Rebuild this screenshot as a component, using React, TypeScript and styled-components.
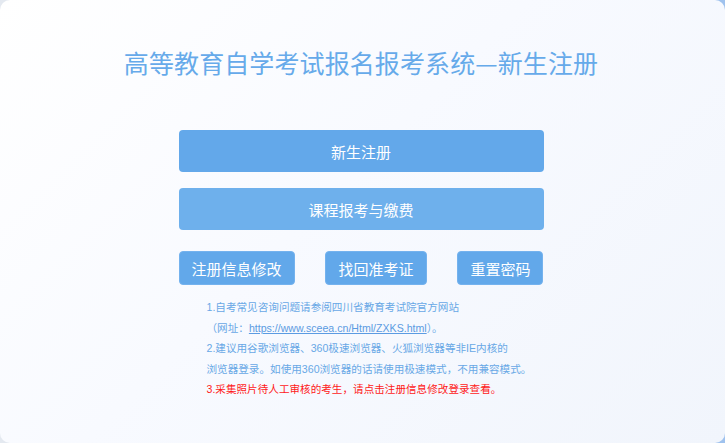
import React from "react";
import styled, { createGlobalStyle } from "styled-components";

const Global = createGlobalStyle`
  html, body { margin: 0; padding: 0; }
  body {
    width: 725px;
    height: 443px;
    overflow: hidden;
    background: linear-gradient(90deg, #e4e9f0 0%, #c9daf0 60%, #9fc2ee 100%);
    font-family: "Noto Sans CJK SC", "Liberation Sans", sans-serif;
  }
`;

const Card = styled.div`
  box-sizing: border-box;
  width: 725px;
  height: 443px;
  border-radius: 10px;
  background: linear-gradient(135deg, #ffffff 0%, #f8faff 45%, #f1f5fc 100%);
  display: flex;
  flex-direction: column;
  align-items: center;
  padding: 44px 3px 0 0;
`;

const Title = styled.h1`
  margin: 0;
  font-size: 25px;
  line-height: 36px;
  font-weight: 400;
  color: #66aaea;
  letter-spacing: 0.1px;
`;

const Panel = styled.div`
  width: 365px;
  margin-top: 50px;
  display: flex;
  flex-direction: column;
`;

const WideButton = styled.button<{ $tone: string }>`
  height: 42px;
  width: 100%;
  border: none;
  border-radius: 4px;
  background: ${(p) => p.$tone};
  color: #ffffff;
  font-family: inherit;
  font-size: 15px;
  margin-bottom: 16px;
  cursor: pointer;
  padding: 0;
`;

const Row = styled.div`
  display: flex;
  justify-content: space-between;
  margin-top: 5px;
`;

const SmallButton = styled.button`
  height: 34px;
  padding: 0 12px;
  border: 1px solid #74b2ee;
  border-radius: 4px;
  background: #62a8ea;
  color: #ffffff;
  font-family: inherit;
  font-size: 15px;
  cursor: pointer;
`;

const Notes = styled.div`
  margin: 12px 0 0 28px;
  font-family: "Liberation Sans", "Noto Sans CJK SC", sans-serif;
  font-size: 10.6px;
  line-height: 20.5px;
  color: #68a8e6;
  white-space: nowrap;
`;

const Line = styled.div<{ $warn?: boolean }>`
  color: ${(p) => (p.$warn ? "#ff1a1a" : "inherit")};
`;

const Link = styled.a`
  color: #5b9be2;
  text-decoration: underline;
`;

export default function App() {
  return (
    <>
      <Global />
      <Card>
        <Title>高等教育自学考试报名报考系统—新生注册</Title>
        <Panel>
          <WideButton $tone="#63a8ea">新生注册</WideButton>
          <WideButton $tone="#6eb0ec">课程报考与缴费</WideButton>
          <Row>
            <SmallButton>注册信息修改</SmallButton>
            <SmallButton>找回准考证</SmallButton>
            <SmallButton>重置密码</SmallButton>
          </Row>
          <Notes>
            <Line>1.自考常见咨询问题请参阅四川省教育考试院官方网站</Line>
            <Line>
              （网址：<Link href="#">https://www.sceea.cn/Html/ZXKS.html</Link>）。
            </Line>
            <Line>2.建议用谷歌浏览器、360极速浏览器、火狐浏览器等非IE内核的</Line>
            <Line>浏览器登录。如使用360浏览器的话请使用极速模式，不用兼容模式。</Line>
            <Line $warn>3.采集照片待人工审核的考生，请点击注册信息修改登录查看。</Line>
          </Notes>
        </Panel>
      </Card>
    </>
  );
}
